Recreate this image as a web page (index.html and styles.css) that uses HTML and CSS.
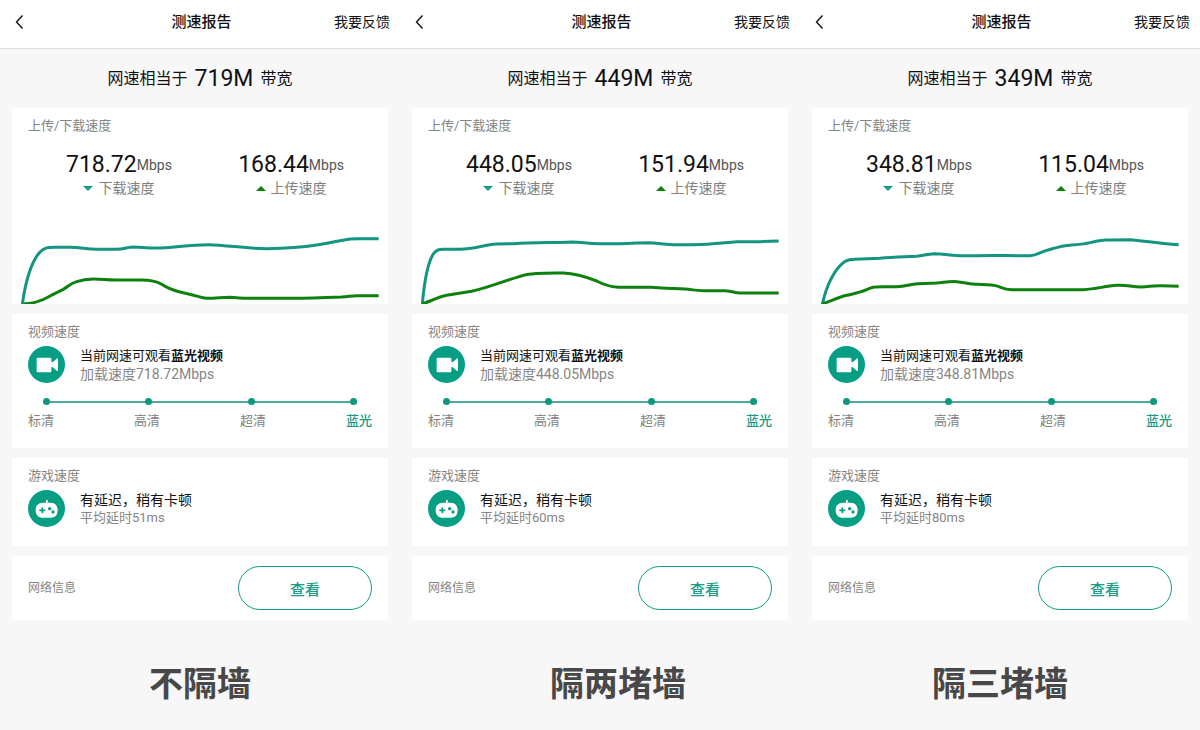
FILE: index.html
```
<!DOCTYPE html>
<html lang="zh-CN">
<head>
  <meta charset="UTF-8">
  <meta name="viewport" content="width=device-width, initial-scale=1.0">
  <title>测速报告</title>
  <link rel="stylesheet" href="styles.css">
</head>
<body>
  <svg class="sprite" aria-hidden="true">
    <symbol id="icon-back" viewBox="0 0 12 16">
      <path d="M9.500 1.500 L3.500 8 L9.500 14.500" fill="none" stroke="currentColor" stroke-width="1.400"/>
    </symbol>
    <symbol id="icon-video" viewBox="0 0 111 111">
      <circle cx="55.500" cy="55.500" r="55.500" fill="#069f84"/>
      <path fill="#fff" d="M29 35 H67 Q70 35 70 38 V48 L75 48 L86 38 Q90 35 90 40 V72 Q90 77 86 74 L75 64 H70 V76 Q70 79 67 79 H29 Q26 79 26 76 V38 Q26 35 29 35 Z"/>
    </symbol>
    <symbol id="icon-game" viewBox="0 0 111 111">
      <circle cx="55.500" cy="55.500" r="55.500" fill="#069f84"/>
      <path fill="#fff" d="M54 30 H59 V38 H68 C82 38 89 48 89 60 C89 74 82 83 70 83 H42 C30 83 23 74 23 60 C23 48 30 38 44 38 H54 Z"/>
      <path d="M34 61 H52 M43 52 V70" stroke="#069f84" stroke-width="5"/>
      <circle cx="65" cy="56" r="5" fill="#069f84"/>
      <circle cx="75" cy="66" r="5" fill="#069f84"/>
    </symbol>
  </svg>

  <div class="container">
    <div class="report">
      <header class="topbar">
        <button class="back" type="button" aria-label="返回"><svg><use href="#icon-back"/></svg></button>
        <h1>测速报告</h1>
        <a class="feedback" href="#">我要反馈</a>
      </header>
      <p class="bandwidth">网速相当于 <strong>719M</strong> 带宽</p>

      <section class="card speed">
        <h2>上传/下载速度</h2>
        <div class="metrics">
          <div class="metric">
            <p class="value">718.72<span>Mbps</span></p>
            <p class="label"><i class="down"></i>下载速度</p>
          </div>
          <div class="metric">
            <p class="value">168.44<span>Mbps</span></p>
            <p class="label"><i class="up"></i>上传速度</p>
          </div>
        </div>
        <svg class="chart" viewBox="36 0 1128 282">
          <path class="line-up" d="M66 282 C100 282 130 270 152 257 L190 238 C205 229 210 221 230 215 C250 208 262 207 280 207 C305 207 320 210 345 210 H425 C450 210 470 214 485 223 C500 233 510 239 540 246 L575 254 C595 259 605 264 620 265 C650 265 665 262 690 262 C715 263 725 265 745 265 H850 C920 265 980 262 1025 261 C1045 260 1055 257 1070 257 H1136"/>
          <path class="line-down" d="M67 282 C78 205 98 152 118 128 C132 113 142 112 165 112 H210 C245 113 255 117 290 118 H350 C375 117 375 112 400 111 C425 111 435 114 465 114 C520 114 560 104 625 104 C680 105 740 116 800 116 C860 115 905 112 950 105 C990 98 1020 92 1050 87 Q1060 86 1075 86 H1136"/>
        </svg>
      </section>

      <section class="card video">
        <h2>视频速度</h2>
        <div class="info">
          <svg class="icon"><use href="#icon-video"/></svg>
          <div>
            <p class="main">当前网速可观看<b>蓝光视频</b></p>
            <p class="sub">加载速度718.72Mbps</p>
          </div>
        </div>
        <div class="track"><i></i><i></i><i></i><i></i></div>
        <ul class="levels">
          <li>标清</li>
          <li>高清</li>
          <li>超清</li>
          <li class="active">蓝光</li>
        </ul>
      </section>

      <section class="card">
        <h2>游戏速度</h2>
        <div class="info">
          <svg class="icon"><use href="#icon-game"/></svg>
          <div>
            <p class="main">有延迟，稍有卡顿</p>
            <p class="sub">平均延时51ms</p>
          </div>
        </div>
      </section>

      <section class="card network">
        <h2>网络信息</h2>
        <button type="button" class="view">查看</button>
      </section>
      <p class="caption">不隔墙</p>
    </div>

    <div class="report">
      <header class="topbar">
        <button class="back" type="button" aria-label="返回"><svg><use href="#icon-back"/></svg></button>
        <h1>测速报告</h1>
        <a class="feedback" href="#">我要反馈</a>
      </header>
      <p class="bandwidth">网速相当于 <strong>449M</strong> 带宽</p>

      <section class="card speed">
        <h2>上传/下载速度</h2>
        <div class="metrics">
          <div class="metric">
            <p class="value">448.05<span>Mbps</span></p>
            <p class="label"><i class="down"></i>下载速度</p>
          </div>
          <div class="metric">
            <p class="value">151.94<span>Mbps</span></p>
            <p class="label"><i class="up"></i>上传速度</p>
          </div>
        </div>
        <svg class="chart" viewBox="36 0 1128 282">
          <path class="line-down" d="M67 282 C73 215 82 160 100 132 C110 119 114 118 130 118 H180 C225 117 250 105 290 102 L340 101 C400 98 460 98 515 96 C550 96 555 101 600 101 H660 C700 101 715 98 745 98 C775 99 780 103 820 104 H880 C930 103 970 98 1010 95 H1080 L1136 93"/>
          <path class="line-up" d="M67 282 C95 272 115 261 140 256 L215 244 C265 233 320 210 370 196 C400 188 430 189 490 189 C520 190 560 201 590 213 C605 221 620 229 655 232 H755 C790 234 820 236 855 237 C880 239 885 242 910 242 H975 C1000 243 1000 248 1020 249 H1136"/>
        </svg>
      </section>

      <section class="card video">
        <h2>视频速度</h2>
        <div class="info">
          <svg class="icon"><use href="#icon-video"/></svg>
          <div>
            <p class="main">当前网速可观看<b>蓝光视频</b></p>
            <p class="sub">加载速度448.05Mbps</p>
          </div>
        </div>
        <div class="track"><i></i><i></i><i></i><i></i></div>
        <ul class="levels">
          <li>标清</li>
          <li>高清</li>
          <li>超清</li>
          <li class="active">蓝光</li>
        </ul>
      </section>

      <section class="card">
        <h2>游戏速度</h2>
        <div class="info">
          <svg class="icon"><use href="#icon-game"/></svg>
          <div>
            <p class="main">有延迟，稍有卡顿</p>
            <p class="sub">平均延时60ms</p>
          </div>
        </div>
      </section>

      <section class="card network">
        <h2>网络信息</h2>
        <button type="button" class="view">查看</button>
      </section>
      <p class="caption shifted">隔两堵墙</p>
    </div>

    <div class="report">
      <header class="topbar">
        <button class="back" type="button" aria-label="返回"><svg><use href="#icon-back"/></svg></button>
        <h1>测速报告</h1>
        <a class="feedback" href="#">我要反馈</a>
      </header>
      <p class="bandwidth">网速相当于 <strong>349M</strong> 带宽</p>

      <section class="card speed">
        <h2>上传/下载速度</h2>
        <div class="metrics">
          <div class="metric">
            <p class="value">348.81<span>Mbps</span></p>
            <p class="label"><i class="down"></i>下载速度</p>
          </div>
          <div class="metric">
            <p class="value">115.04<span>Mbps</span></p>
            <p class="label"><i class="up"></i>上传速度</p>
          </div>
        </div>
        <svg class="chart" viewBox="36 0 1128 282">
          <path class="line-down" d="M67 282 C78 235 98 185 130 158 C140 149 145 150 165 148 L240 145 C280 141 310 141 350 139 C375 137 375 132 405 131 C435 132 440 136 480 137 H530 C590 135 630 138 690 137 C715 135 715 128 740 121 C765 114 785 107 815 105 C840 104 850 103 870 98 C900 89 925 89 990 89 C1030 92 1065 99 1136 104"/>
          <path class="line-up" d="M67 282 C95 272 115 262 140 256 C160 251 180 248 200 239 C215 231 220 230 250 230 H290 C320 229 325 223 355 221 L410 219 C435 217 445 214 470 215 C495 217 505 223 530 223 C555 224 575 223 595 229 C610 235 615 239 635 239 H850 C890 237 915 228 950 226 C985 224 990 231 1025 231 C1050 230 1055 226 1085 227 L1136 229"/>
        </svg>
      </section>

      <section class="card video">
        <h2>视频速度</h2>
        <div class="info">
          <svg class="icon"><use href="#icon-video"/></svg>
          <div>
            <p class="main">当前网速可观看<b>蓝光视频</b></p>
            <p class="sub">加载速度348.81Mbps</p>
          </div>
        </div>
        <div class="track"><i></i><i></i><i></i><i></i></div>
        <ul class="levels">
          <li>标清</li>
          <li>高清</li>
          <li>超清</li>
          <li class="active">蓝光</li>
        </ul>
      </section>

      <section class="card">
        <h2>游戏速度</h2>
        <div class="info">
          <svg class="icon"><use href="#icon-game"/></svg>
          <div>
            <p class="main">有延迟，稍有卡顿</p>
            <p class="sub">平均延时80ms</p>
          </div>
        </div>
      </section>

      <section class="card network">
        <h2>网络信息</h2>
        <button type="button" class="view">查看</button>
      </section>
      <p class="caption">隔三堵墙</p>
    </div>
  </div>
</body>
</html>
```
FILE: styles.css
```
* {
  box-sizing: border-box;
}

body, h1, h2, p, ul {
  margin: 0;
  padding: 0;
}

body {
  font-family: Roboto, "Noto Sans CJK SC", sans-serif;
  font-size: 13px;
  line-height: 18px;
  color: #111;
  background-color: #f7f7f7;
}

button {
  font-family: inherit;
  cursor: pointer;
}

.sprite {
  display: none;
}

.container {
  display: grid;
  grid-template-columns: repeat(3, 1fr);
}

/* top bar */
.topbar {
  display: grid;
  grid-template-columns: 1fr auto 1fr;
  align-items: center;
  height: 49px;
  padding: 0 10px 4px 13px;
  background-color: #fff;
  border-bottom: 1px solid #dedede;
}

.topbar h1 {
  font-size: 15px;
  font-weight: 500;
}

.back {
  justify-self: start;
  display: flex;
  padding: 0;
  border: none;
  background: none;
  color: #111;
}

.back svg {
  width: 12px;
  height: 16px;
}

.feedback {
  justify-self: end;
  font-size: 14px;
  color: #111;
  text-decoration: none;
}

.bandwidth {
  display: flex;
  align-items: center;
  justify-content: center;
  gap: 7px;
  padding: 15px 0 14px;
  font-size: 16px;
  line-height: 30px;
}

.bandwidth strong {
  font-size: 23px;
  font-weight: 400;
}

/* cards */
.card {
  margin: 0 12px 10px;
  padding: 9px 16px 19px;
  background-color: #fff;
}

.card h2 {
  font-size: 13px;
  font-weight: 400;
  color: #858585;
}

.speed {
  padding-bottom: 0;
}

.video {
  padding-bottom: 18px;
}

.metrics {
  display: flex;
  justify-content: space-between;
  padding: 16px 28px 13px 38px;
}

.value {
  display: flex;
  align-items: center;
  justify-content: center;
  font-size: 23px;
  line-height: 28px;
}

.value span {
  font-size: 14px;
  color: #555;
}

.label {
  display: flex;
  align-items: center;
  justify-content: center;
  gap: 5px;
  font-size: 14px;
  color: #808080;
}

.down, .up {
  border-left: 5px solid transparent;
  border-right: 5px solid transparent;
}

.down {
  border-top: 5px solid #149c85;
}

.up {
  border-bottom: 5px solid #0d800d;
}

.chart {
  display: block;
  width: calc(100% + 32px);
  margin: 0 -16px;
}

.line-down, .line-up {
  fill: none;
  stroke: #14957f;
  stroke-width: 9;
}

.line-up {
  stroke: #0d800d;
}

.info {
  display: flex;
  align-items: center;
  gap: 15px;
  margin-top: 5px;
}

.icon {
  width: 37px;
  height: 37px;
}

.main {
  font-size: 14px;
}

.sub {
  color: #858585;
}

.video .main {
  font-size: 13px;
}

.video .sub {
  font-size: 14px;
}

.track {
  display: flex;
  align-items: center;
  justify-content: space-between;
  margin: 15px 15px 7px;
  background: linear-gradient(#4fa99c, #4fa99c) center / 100% 2px no-repeat;
}

.track i {
  width: 7px;
  height: 7px;
  border-radius: 50%;
  background-color: #0d9880;
}

.levels {
  display: flex;
  justify-content: space-between;
  list-style: none;
  color: #808080;
}

.levels .active {
  font-weight: 500;
  color: #149c85;
}

.network {
  display: flex;
  align-items: center;
  justify-content: space-between;
  padding: 10px 16px;
}

.network h2 {
  font-size: 12px;
}

.view {
  width: 134px;
  height: 44px;
  border: 1px solid #149c85;
  border-radius: 22px;
  background-color: #fff;
  font-size: 15px;
  font-weight: 500;
  color: #149c85;
}

.caption {
  padding-top: 30px;
  font-size: 34px;
  font-weight: 700;
  line-height: 48px;
  text-align: center;
  color: #484848;
}

.shifted {
  padding-left: 36px;
}
```
